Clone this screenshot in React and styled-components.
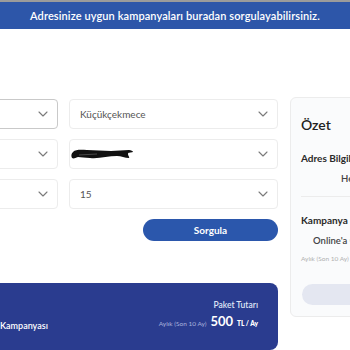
import React from 'react';
import styled, { createGlobalStyle } from 'styled-components';

const GlobalStyle = createGlobalStyle`
  html, body {
    margin: 0;
    padding: 0;
    background: #ffffff;
    overflow: hidden;
  }
  body {
    font-family: "Lato", "Noto Sans", sans-serif;
    color: #2b2b2b;
  }
`;

const Banner = styled.div`
  border-top: 2px solid #9b9b9b;
  height: 27px;
  background: #2d56a9;
  color: #ffffff;
  font-size: 11px;
  font-weight: 600;
  display: flex;
  align-items: center;
  justify-content: center;
  letter-spacing: 0.1px;
`;

const Page = styled.div`
  display: flex;
  align-items: flex-start;
  gap: 12px;
  margin-left: -151px;
  padding-top: 70px;
`;

const FormColumn = styled.div`
  width: 429px;
  flex-shrink: 0;
  display: flex;
  flex-direction: column;
`;

const FieldGrid = styled.div`
  display: grid;
  grid-template-columns: 209px 209px;
  column-gap: 11px;
  row-gap: 10px;
`;

const SelectBox = styled.div`
  height: 30px;
  box-sizing: border-box;
  border: 1px solid ${(p) => (p.$active ? '#c9c9c9' : '#ececec')};
  border-radius: 4px;
  background: #fff;
  display: flex;
  align-items: center;
  justify-content: space-between;
  padding: 0 9px 0 10px;
  font-size: 10px;
  color: #555;
`;

const Redacted = styled.svg`
  display: block;
  margin-left: -9px;
`;

const ButtonRow = styled.div`
  display: flex;
  justify-content: flex-end;
  margin-top: 10px;
`;

const QueryButton = styled.button`
  width: 135px;
  height: 22px;
  border: none;
  border-radius: 11px;
  background: #2b57ac;
  color: #fff;
  font-family: inherit;
  font-size: 10px;
  font-weight: 700;
  cursor: pointer;
`;

const PackageCard = styled.div`
  margin-top: 42px;
  height: 67px;
  background: #2a3c8f;
  border-radius: 8px;
  display: flex;
  justify-content: space-between;
  align-items: flex-start;
  padding: 0 20px 0 151px;
  color: #fff;
`;

const PackageName = styled.div`
  margin-top: 37px;
  font-size: 9px;
  font-weight: 600;
`;

const PriceBlock = styled.div`
  margin-top: 17px;
  display: flex;
  flex-direction: column;
  align-items: flex-end;
  gap: 3px;
`;

const PriceLabel = styled.div`
  font-size: 8.5px;
  font-weight: 600;
  color: #dfe4f6;
`;

const PriceLine = styled.div`
  display: flex;
  align-items: baseline;
  gap: 4px;
`;

const Period = styled.span`
  font-size: 6.5px;
  color: #aab4de;
`;

const Amount = styled.span`
  font-size: 13px;
  font-weight: 700;
`;

const Unit = styled.span`
  font-size: 6.5px;
  font-weight: 800;
`;

const Summary = styled.div`
  width: 240px;
  flex-shrink: 0;
  margin-top: -2px;
  box-sizing: border-box;
  height: 220px;
  border: 1px solid #ececec;
  border-radius: 6px;
  background: #fafbfc;
  padding: 18px 0 0 10px;
`;

const SummaryTitle = styled.div`
  font-size: 14px;
  font-weight: 600;
  color: #222;
`;

const SectionTitle = styled.div`
  margin-top: ${(p) => p.$top}px;
  font-size: 10px;
  font-weight: 700;
  color: #2a2a2a;
  white-space: nowrap;
`;

const SectionValue = styled.div`
  margin-top: ${(p) => p.$top}px;
  padding-left: ${(p) => p.$indent}px;
  font-size: 9.5px;
  font-weight: 600;
  color: #444;
  white-space: nowrap;
`;

const Divider = styled.div`
  margin-top: 12px;
  height: 1px;
  background: #ececec;
`;

const SmallNote = styled.div`
  margin-top: 9px;
  font-size: 6.5px;
  color: #b0b0b0;
  white-space: nowrap;
`;

const GhostButton = styled.div`
  margin-top: 22px;
  margin-left: 1px;
  height: 21px;
  border-radius: 11px;
  background: #e4e7f1;
`;

function Chevron() {
  return (
    <svg width="10" height="6" viewBox="0 0 10 6" fill="none">
      <path d="M1 1l4 4 4-4" stroke="#7a7a7a" strokeWidth="1.1" strokeLinecap="round" strokeLinejoin="round" />
    </svg>
  );
}

function Field({ children, active }) {
  return (
    <SelectBox $active={active}>
      <span>{children}</span>
      <Chevron />
    </SelectBox>
  );
}

export default function App() {
  return (
    <>
      <GlobalStyle />
      <Banner>Adresinize uygun kampanyaları buradan sorgulayabilirsiniz.</Banner>
      <Page>
        <FormColumn>
          <FieldGrid>
            <Field active />
            <Field>Küçükçekmece</Field>
            <Field />
            <Field>
              <Redacted width="64" height="13" viewBox="0 0 64 13">
                <path d="M2 4c3-3 9-2 14-2 8 0 16 1 24 1 6 0 12-1 18-1 2 0 4 1 4 2-3 1-5 0-5 2 0 2 2 3 1 4-4 0-8-2-12-2-9 0-18 3-27 2-5 0-9-1-12-1-3 1-4 2-6 1C0 8 0 6 2 4z" fill="#111" />
                <path d="M8 7c6 0 12-1 18-1" stroke="#555" strokeWidth="0.8" />
              </Redacted>
            </Field>
            <Field />
            <Field>15</Field>
          </FieldGrid>
          <ButtonRow>
            <QueryButton>Sorgula</QueryButton>
          </ButtonRow>
          <PackageCard>
            <PackageName>Kampanyası</PackageName>
            <PriceBlock>
              <PriceLabel>Paket Tutarı</PriceLabel>
              <PriceLine>
                <Period>Aylık (Son 10 Ay)</Period>
                <Amount>500</Amount>
                <Unit>TL / Ay</Unit>
              </PriceLine>
            </PriceBlock>
          </PackageCard>
        </FormColumn>
        <Summary>
          <SummaryTitle>Özet</SummaryTitle>
          <SectionTitle $top={19}>Adres Bilgileri</SectionTitle>
          <SectionValue $top={9} $indent={40}>Hemen bağlanabilirsiniz</SectionValue>
          <Divider />
          <SectionTitle $top={17}>Kampanya Seçimi</SectionTitle>
          <SectionValue $top={9} $indent={12}>Online'a Özel Kampanya</SectionValue>
          <SmallNote>Aylık (Son 10 Ay) 500 TL / Ay</SmallNote>
          <GhostButton />
        </Summary>
      </Page>
    </>
  );
}
